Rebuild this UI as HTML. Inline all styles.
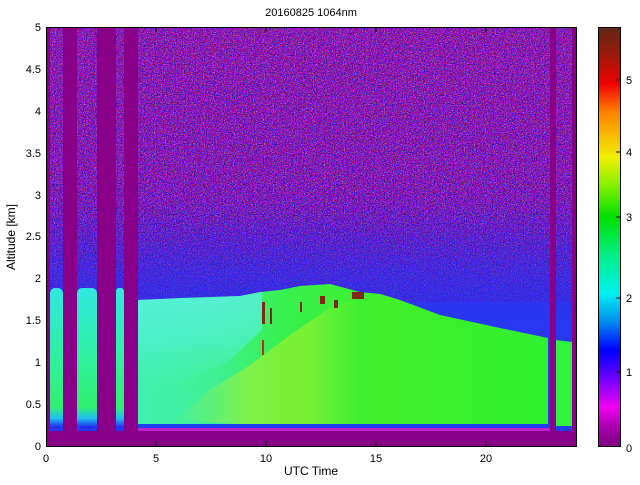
<!DOCTYPE html>
<html><head><meta charset="utf-8"><style>
html,body{margin:0;padding:0;background:#fff;}
body{width:640px;height:480px;overflow:hidden;font-family:"Liberation Sans",sans-serif;}
</style></head><body>
<svg width="640" height="480" viewBox="0 0 640 480" xmlns="http://www.w3.org/2000/svg" font-family="Liberation Sans, sans-serif" font-size="11">
<defs>
<linearGradient id="bg" x1="0" y1="0" x2="0" y2="1">
<stop offset="0" stop-color="#7028c0"/>
<stop offset="0.35" stop-color="#6028c8"/>
<stop offset="0.5" stop-color="#4a28d8"/>
<stop offset="0.6" stop-color="#3030e8"/>
<stop offset="0.7" stop-color="#2838f0"/>
<stop offset="1" stop-color="#2838f0"/>
</linearGradient>
<linearGradient id="bl" x1="0" y1="0" x2="0" y2="1">
<stop offset="0" stop-color="#2030f0" stop-opacity="0"/>
<stop offset="0.6" stop-color="#2030f0" stop-opacity="0.45"/>
<stop offset="1" stop-color="#2030f0" stop-opacity="0.7"/>
</linearGradient>
<linearGradient id="cb" x1="0" y1="1" x2="0" y2="0">
<stop offset="0" stop-color="#800080"/>
<stop offset="0.04" stop-color="#a000a8"/>
<stop offset="0.094" stop-color="#f000f0"/>
<stop offset="0.17" stop-color="#6000ff"/>
<stop offset="0.23" stop-color="#0000ff"/>
<stop offset="0.30" stop-color="#0090f0"/>
<stop offset="0.365" stop-color="#00f0f0"/>
<stop offset="0.45" stop-color="#00f090"/>
<stop offset="0.547" stop-color="#00e000"/>
<stop offset="0.62" stop-color="#80f000"/>
<stop offset="0.69" stop-color="#f0f000"/>
<stop offset="0.80" stop-color="#ff8000"/>
<stop offset="0.866" stop-color="#f00000"/>
<stop offset="0.93" stop-color="#a01808"/>
<stop offset="1" stop-color="#602818"/>
</linearGradient>
<linearGradient id="blh" x1="0" y1="0" x2="1" y2="0">
<stop offset="0" stop-color="#40f0b0"/>
<stop offset="0.2" stop-color="#40f090"/>
<stop offset="0.35" stop-color="#38f050"/>
<stop offset="0.6" stop-color="#40f028"/>
<stop offset="1" stop-color="#30f030"/>
</linearGradient>
<linearGradient id="strip" x1="0" y1="0" x2="0" y2="1">
<stop offset="0" stop-color="#30e8e0"/>
<stop offset="0.5" stop-color="#30f0a0"/>
<stop offset="0.85" stop-color="#30f070"/>
<stop offset="0.93" stop-color="#20c0f0"/>
<stop offset="1" stop-color="#2020f0"/>
</linearGradient>
<linearGradient id="cy" x1="0" y1="0" x2="0" y2="1">
<stop offset="0" stop-color="#60f0f0"/>
<stop offset="0.5" stop-color="#50f0d0"/>
<stop offset="1" stop-color="#50f0c0" stop-opacity="0"/>
</linearGradient>
<linearGradient id="yel" x1="0" y1="0" x2="1" y2="0">
<stop offset="0" stop-color="#c0f020" stop-opacity="0"/>
<stop offset="0.4" stop-color="#c0f020" stop-opacity="0.5"/>
<stop offset="0.7" stop-color="#c8f020" stop-opacity="0.45"/>
<stop offset="1" stop-color="#a0f020" stop-opacity="0"/>
</linearGradient>
<filter id="nz" x="0" y="0" width="100%" height="100%">
<feTurbulence type="fractalNoise" baseFrequency="0.9" numOctaves="1" seed="3"/>
<feColorMatrix type="matrix" values="5 0 0 0 -2  0 0 4 0 -2.4  0 5 0 0 -2  0 0 0 0 0.5"/>
</filter>
</defs>
<rect x="46" y="27" width="530" height="419" fill="url(#bg)"/>
<rect x="46" y="27" width="530" height="275" filter="url(#nz)"/>
<rect x="46" y="200" width="530" height="102" fill="url(#bl)"/>
<g fill="#880088">
<rect x="46" y="27" width="4" height="419"/>
<rect x="63" y="27" width="14" height="419"/>
<rect x="97" y="27" width="19" height="419"/>
<rect x="124" y="27" width="14" height="419"/>
<rect x="550" y="27" width="6" height="419"/>
<rect x="572" y="27" width="4" height="419"/>
</g>
<rect x="50" y="288" width="13" height="140" rx="5" fill="url(#strip)"/>
<rect x="77" y="288" width="20" height="140" rx="5" fill="url(#strip)"/>
<rect x="116" y="288" width="8" height="140" rx="3" fill="url(#strip)"/>
<polygon points="138,300 180,298 240,296 260,292 280,290 300,286 330,284 360,292 380,294 400,300 440,315 500,328 548,338 548,428 138,428" fill="url(#blh)"/>
<polygon points="138,300 240,296 262,292 262,330 230,360 180,385 138,390" fill="url(#cy)" opacity="0.7"/>
<polygon points="175,420 210,390 250,365 290,335 330,308 355,300 365,330 365,425 250,425" fill="url(#yel)"/>
<polygon points="556,340 572,342 572,430 556,430" fill="#30f040"/>
<g fill="#802818">
<rect x="262" y="302" width="3" height="22"/>
<rect x="270" y="308" width="2" height="16"/>
<rect x="320" y="296" width="5" height="8"/>
<rect x="334" y="300" width="4" height="8"/>
<rect x="352" y="292" width="12" height="7"/>
<rect x="300" y="302" width="2" height="10"/>
</g>
<rect x="262" y="340" width="2" height="15" fill="#c03010"/>
<rect x="138" y="424" width="412" height="4" fill="#2040f0"/>
<rect x="138" y="428" width="412" height="3" fill="#c020d0"/>
<rect x="556" y="426" width="16" height="4" fill="#2040f0"/>
<rect x="46" y="431" width="530" height="15" fill="#880088"/>
<rect x="46.5" y="27.5" width="530" height="419" fill="none" stroke="#000" stroke-width="1"/>
<g stroke="#000" stroke-width="1">
<line x1="156" y1="446" x2="156" y2="441"/><line x1="266" y1="446" x2="266" y2="441"/>
<line x1="376" y1="446" x2="376" y2="441"/><line x1="486" y1="446" x2="486" y2="441"/>
<line x1="156" y1="27" x2="156" y2="32"/><line x1="266" y1="27" x2="266" y2="32"/>
<line x1="376" y1="27" x2="376" y2="32"/><line x1="486" y1="27" x2="486" y2="32"/>
</g>
<g text-anchor="middle" font-size="11">
<text x="46" y="462">0</text><text x="156" y="462">5</text><text x="266" y="462">10</text>
<text x="376" y="462">15</text><text x="486" y="462">20</text>
<text x="311" y="475" font-size="12">UTC Time</text>
<text x="311" y="16">20160825 1064nm</text>
</g>
<g text-anchor="end" font-size="11">
<text x="41" y="450">0</text><text x="41" y="408">0.5</text><text x="41" y="366">1</text>
<text x="41" y="324">1.5</text><text x="41" y="282">2</text><text x="41" y="240">2.5</text>
<text x="41" y="199">3</text><text x="41" y="157">3.5</text><text x="41" y="115">4</text>
<text x="41" y="73">4.5</text><text x="41" y="31">5</text>
</g>
<text transform="translate(15,237) rotate(-90)" text-anchor="middle" font-size="12">Altitude [km]</text>
<rect x="598.5" y="27.5" width="22" height="419" fill="url(#cb)" stroke="#000"/>
<g stroke="#000"><line x1="616" y1="80" x2="620" y2="80"/><line x1="616" y1="152" x2="620" y2="152"/>
<line x1="616" y1="217" x2="620" y2="217"/><line x1="616" y1="298" x2="620" y2="298"/>
<line x1="616" y1="372" x2="620" y2="372"/></g>
<g font-size="11">
<text x="626" y="84">5</text><text x="626" y="156">4</text><text x="626" y="221">3</text>
<text x="626" y="302">2</text><text x="626" y="376">1</text><text x="626" y="452">0</text>
</g>
</svg>
</body></html>
